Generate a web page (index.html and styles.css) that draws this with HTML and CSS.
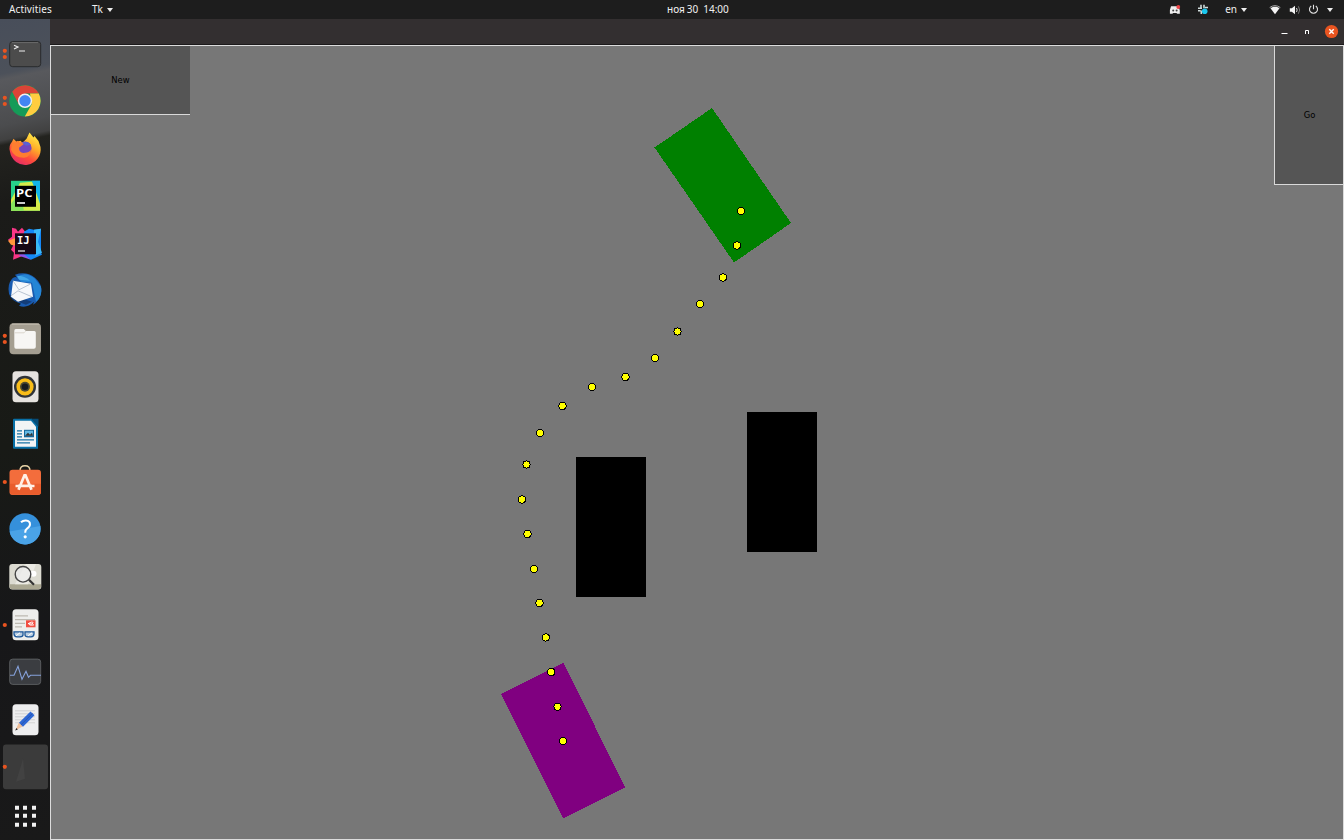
FILE: index.html
```html
<!DOCTYPE html>
<html lang="en">
<head>
<meta charset="utf-8">
<title>Tk</title>
<link rel="stylesheet" href="styles.css">
</head>
<body>
<div class="desktop">
  <header class="topbar">
    <div class="left"><span class="activities">Activities</span><span class="appname">Tk</span><i class="caret"></i></div>
    <div class="clock"><span class="month">ноя</span><span class="day">30</span><span>14:00</span></div>
    <div class="tray">
      <svg class="discord" width="12" height="10" viewBox="0 0 12 10"><path d="M2 1.2h7.5l1.3 4v3.600H8.200L7.400 8H4.200l-.8.8H.9V5z" fill="#eee"/><circle cx="4.2" cy="5.6" r="1" fill="#444"/><circle cx="7.6" cy="5.6" r="1" fill="#444"/><circle cx="9.3" cy="2" r="1.9" fill="#ed4245"/></svg>
      <svg class="slack" width="12" height="11" viewBox="0 0 12 11"><path d="M4 .8v3M1 4.200h4M7 .8v3.500M8 3.500h3M1 6.800h2.500M4.300 6.500V10" stroke="#cfdcdc" stroke-width="1.6" fill="none"/><circle cx="7.7" cy="7.3" r="2.8" fill="#19c7ee"/></svg>
      <span class="lang">en</span><i class="caret"></i>
      <svg class="wifi" width="12" height="10" viewBox="0 0 12 10"><path d="M.7 2.500Q6-1.200 11.300 2.500" fill="none" stroke="#aaa" stroke-width="1"/><path d="M1.500 3.200Q6 .3 10.500 3.200L6 9.300z" fill="#f4f4f4"/></svg>
      <svg class="volume" width="12" height="10" viewBox="0 0 12 10"><path d="M.8 3.300h2L6 .7v8.600L2.800 6.800h-2z" fill="#f4f4f4"/><path d="M7.500 3q1.300 2 0 4" fill="none" stroke="#ddd"/><path d="M9.400 1.300q2.500 3.700 0 7.400" fill="none" stroke="#777"/></svg>
      <svg class="power" width="11" height="11" viewBox="0 0 11 11"><path d="M3.200 2a4 4 0 1 0 4.600 0M5.500.7v4.600" fill="none" stroke="#e4e4e4" stroke-width="1.1"/></svg>
      <i class="caret"></i>
    </div>
  </header>
  <div class="workspace">
    <nav class="dock">
      <svg class="app" viewBox="-25 -23.8 50 47.6"><g class="run"><circle cx="-20.2" cy="-3" r="2.1"/><circle cx="-20.2" cy="3.2" r="2.1"/></g><rect x="-15.3" y="-12.3" width="31" height="25.2" rx="3" fill="#4c4c4c" stroke="#292b2d"/><path d="M-13-11.2h26" stroke="#777" stroke-width=".7"/><path d="M-11-8.5l4 1.8-4 1.8M-6-2.8h6" fill="none" stroke="#eee" stroke-width="1.1"/></svg>
      <svg class="app" viewBox="-25 -23.8 50 47.6"><g class="run"><circle cx="-20.2" cy="-3" r="2.1"/><circle cx="-20.2" cy="3.2" r="2.1"/></g><circle r="15.7" fill="#159b58"/><path d="M13.6-7.8A15.7 15.7 0 0 0-12.8-9L-6 4 0-7.3h13.8z" fill="#db4437"/><path d="M13.8-7.3A15.7 15.7 0 0 1-.2 15.7L6.7 3.5 5-7.3z" fill="#ffcd40"/><circle r="7.2" fill="#f1f1f1"/><circle r="5.7" fill="#4285f4"/></svg>
      <svg class="app" viewBox="-25 -23.8 50 47.6"><defs><linearGradient id="fire" x1=".8" y1="0" x2=".25" y2="1"><stop offset="0" stop-color="#fff04a"/><stop offset=".38" stop-color="#ffad29"/><stop offset=".7" stop-color="#ff4b3c"/><stop offset="1" stop-color="#e22a6c"/></linearGradient></defs><path d="M-11.5-10l3 3 4-1 2 2 4-4 3-6.2 4 5 1-1.5 4 5 2 6A15.4 15.4 0 0 1-15 3q-1.7-6 2-10z" fill="url(#fire)"/><circle cx="0" cy="-.8" r="6.6" fill="#7446bd"/><path d="M-13-5l6-3 2 2 6-1-3 3-4 3q0 6 6 5 4 0 6-3 0 7-7 8-10 0-13-8z" fill="#ff7d30"/><path d="M-3-6q5-3 9 2L1-3z" fill="#5a61d4"/></svg>
      <svg class="app" viewBox="-25 -23.8 50 47.6"><path d="M-14-15h29v30h-29z" fill="#27d18a"/><path d="M-5-13L7-14l8 16v13h-29V4z" fill="#d5ec49"/><path d="M7-15h8V8z" fill="#12b5e8"/><path d="M-14 8L-5-4l4 19h-13z" fill="#85e45c"/><path d="M-10-10h21v21h-21z" fill="#000"/><text x="-9" y=".8" class="ide" textLength="16.5" lengthAdjust="spacingAndGlyphs">PC</text><path d="M-8 7.2h8" stroke="#fff" stroke-width="1.6"/></svg>
      <svg class="app" viewBox="-25 -23.8 50 47.6"><path d="M-13-16L-9-15-7-12-3-16 1-11 3 10-12 16-11 9-14 6-12 2-17-4l4-3z" fill="#f83687"/><path d="M-17-3l8-3 1 8-6-1z" fill="#ff963c"/><path d="M-1-12L4-15 9-14l7-1v24l1 2L6 16-4 11z" fill="#1488f8"/><path d="M9-14l7-1-3 13 4 11-7 3z" fill="#39b8fa"/><path d="M-4 8L6 16-6 12z" fill="#8e54eb"/><path d="M-10-10.5h21v21h-21z" fill="#160716"/><text x="-8" y=".6" class="ide mono">IJ</text><path d="M-7 7.2h7" stroke="#ddd" stroke-width="1.3"/></svg>
      <svg class="app" viewBox="-25 -23.8 50 47.6"><path d="M-13-12Q-10-15-8-13L-10-16Q1-20 10-13q8 7 6 15-2 9-8 12l1-3Q2 18-6 15l2-2Q-14 10-16 3-18-6-13-12z" fill="#195bb0"/><path d="M-8-14Q1-20 10-12l6 8q2 10-5 15L7-8-4-9z" fill="#2585d5"/><path d="M-8-15q8 0 13 5l-11-1z" fill="#43a7e8"/><path d="M-15 4q2 6 8 7l8 3 6-3-9-3z" fill="#133d79"/><path d="M-12-10l18 3 2 13-15 5-7-5z" fill="#f6f8fb"/><path d="M-12-10l6 9L6-7M-14 5l7-5L7 6" fill="none" stroke="#aab6c6" stroke-width=".8"/></svg>
      <svg class="app" viewBox="-25 -23.8 50 47.6"><g class="run"><circle cx="-20.2" cy="-3" r="2.1"/><circle cx="-20.2" cy="3.2" r="2.1"/></g><rect x="-15.5" y="-15.5" width="31.5" height="31" rx="4" fill="#a49e91"/><path d="M-13-14.7h27" stroke="#c8c2b5"/><path d="M-10.7-8q0-1.7 1.5-1.7h8l2 2h8.500q1.500 0 1.500 1.500V8q0 2-2 2H-9q-1.700 0-1.700-2z" fill="#f7f6f4"/><path d="M-10.3-6H-1l1.500-1.500" stroke="#dad6cd" fill="none"/></svg>
      <svg class="app" viewBox="-25 -23.8 50 47.6"><rect x="-12.5" y="-15.5" width="26" height="31" rx="3.5" fill="#e6e3df"/><circle r="11" fill="#303438"/><circle r="8.6" fill="#f8bd18"/><circle r="5" fill="#4f4b31"/><circle r="3.3" fill="#171b20"/></svg>
      <svg class="app" viewBox="-25 -23.8 50 47.6"><path d="M-11-15H7l6 7v23h-24q-1 0-1-1v-28q0-1 1-1z" fill="#0870a7"/><path d="M-10-13H6l5 6v20h-21z" fill="#f2f4f5"/><path d="M6-15h7.500v8z" fill="#064c77"/><path d="M-8-3h5M-8 0h5M-8 3h5M-8 6H9M-8 9H5" stroke="#1972a4" stroke-width="1.3"/><path d="M-1-4H9v7.500H-1z" fill="#15679a"/><path d="M0-3h8v5H0z" fill="#62b8e4"/><path d="M0 2l3-3 2 2 2-2 1 3z" fill="#333"/></svg>
      <svg class="app" viewBox="-25 -23.8 50 47.6"><g class="run"><circle cx="-20.2" cy=".2" r="2.1"/></g><path d="M-5-11q0-5 5-5t5 5" fill="none" stroke="#e8d3a6" stroke-width="1.4"/><rect x="-15.5" y="-12" width="31.5" height="25.2" rx="3" fill="#f36d3c"/><path d="M-15 2h31v8q0 3-3 3h-25q-3 0-3-3z" fill="#e95d2d"/><path d="M-6.5 8L-.5-6.5h1L6.500 8M-7 4H7M-9.500 4.200h3M6.500 4.200h3" fill="none" stroke="#fff1e8" stroke-width="2.7"/></svg>
      <svg class="app" viewBox="-25 -23.8 50 47.6"><circle r="15.6" fill="#3590db"/><path d="M-15.6 0h31.200a15.600 15.600 0 0 1-31.200 0" transform="rotate(-10)" fill="#4aa3e7"/><path d="M-4-6.500Q-2-8.500 1-8.300 5-8 5-4.500 5-2 2-.2.2 1 .2 4" fill="none" stroke="#fff" stroke-width="2"/><circle cx=".2" cy="8" r="1.6" fill="#fff"/></svg>
      <svg class="app" viewBox="-25 -23.8 50 47.6"><rect x="-15.7" y="-12.8" width="32" height="25.5" rx="3" fill="#dcdbd1"/><path d="M-15.5 7.500h31.500v2q0 3-3 3h-25.500q-3 0-3-3z" fill="#aaa792"/><path d="M1-12.800L-10 7.500H3l8-20z" fill="#ecebe4"/><circle cx="8.5" cy="-3" r="3" fill="#fff"/><circle cx="-2" cy="-2.5" r="7.8" fill="#eee" fill-opacity=".75" stroke="#474747" stroke-width="1.4"/><path d="M4 3l5 5" stroke="#343434" stroke-width="2.2"/></svg>
      <svg class="app" viewBox="-25 -23.8 50 47.6"><g class="run"><circle cx="-20.2" cy=".2" r="2.1"/></g><rect x="-12.5" y="-15.5" width="26" height="31" rx="3.5" fill="#eeeeec"/><path d="M-10-9H3M-10-5.200H10M-10-1.500H0M-10 2H-3" stroke="#bdb9b1" stroke-width="1.2"/><path d="M1-4.500h9.500v7H1z" fill="#f14e42"/><path d="M3-1q5-3 5-1t-4 1q0 2 5 1" fill="none" stroke="#fff"/><path d="M-11 7h9v3q0 2-3 2h-3q-3 0-3-3zM0 7h9v2q0 3-3 3H3q-3 0-3-2z" fill="#b8cce0" stroke="#1c5799" stroke-width="1.3"/><path d="M-9 11l4-3M3 11l4-3" stroke="#fff"/></svg>
      <svg class="app" viewBox="-25 -23.8 50 47.6"><rect x="-15.3" y="-12.7" width="31" height="25.3" rx="3" fill="#3b3d41" stroke="#65676a" stroke-width=".8"/><path d="M-15 3.500h4l4-9 4 13 4-8 2.500 6 2-2H16" fill="none" stroke="#86a2dc" stroke-width="1.1"/></svg>
      <svg class="app" viewBox="-25 -23.8 50 47.6"><rect x="-12.5" y="-15.5" width="26" height="31" rx="3.5" fill="#eeeeef"/><path d="M-10-9H10M-10-6H10M-10-3H10M-10 0H10M-10 3H10" stroke="#cbcbcb" stroke-width=".8"/><path d="M-9.500 10.500L-6 2.500l4 4z" fill="#efc09c"/><path d="M-9.800 10.800l1.200-2.600 1.400 1.400z" fill="#222"/><path d="M-6 3L5.500-8.300l4 3.800L-2 7z" fill="#2e67d4"/><path d="M-4 5L7.500-6.400" stroke="#2855b0"/></svg>
      <svg class="app" viewBox="-25 -23.8 50 47.6"><rect x="-22" y="-22.4" width="45" height="44.8" rx="3" fill="#3b3b3b"/><path d="M-9 15Q-4-1-2-8L0 12z" fill="#424242"/><g class="run"><circle cx="-20.2" cy="0" r="2.1"/></g></svg>
      <svg class="app launcher" viewBox="-25 -23.8 50 47.6"><path d="M-10-10h4v4h-4zM-2-10h4v4h-4zM7-10h4v4H7zM-10-2h4v4h-4zM-2-2h4v4h-4zM7-2h4v4H7zM-10 7h4v4h-4zM-2 7h4v4h-4zM7 7h4v4H7z" fill="#f2f2f2"/></svg>
    </nav>
    <main class="window">
      <div class="titlebar">
        <svg width="64" height="16" viewBox="0 0 64 16"><path d="M4.500 9.500h6" stroke="#fff"/><path d="M28.500 10V6.500h3V10" fill="none" stroke="#fff"/><circle cx="54.5" cy="7.5" r="6.6" fill="#e95420"/><path d="M52.300 5.300l4.400 4.400M56.700 5.300l-4.400 4.400" stroke="#fff" stroke-width="1.4"/></svg>
      </div>
      <div class="client">
        <svg class="scene" viewBox="51 46 1292 793" shape-rendering="crispEdges">
          <path d="M712 108L791 223 734 262.500 654.500 147.500z" fill="#008000"/>
          <path d="M563.500 663L625.300 787.500 563.500 818.500 501 694z" fill="#800080"/>
          <path d="M576 457h70v140h-70zM747 412h70v140h-70z"/>
          <g class="trail">
            <circle cx="741" cy="211" r="3.600"/><circle cx="737" cy="245.500" r="3.600"/><circle cx="723" cy="277.500" r="3.600"/><circle cx="700" cy="304" r="3.600"/><circle cx="677.500" cy="331.500" r="3.600"/><circle cx="655" cy="358" r="3.600"/><circle cx="625.500" cy="377" r="3.600"/><circle cx="592" cy="387" r="3.600"/><circle cx="562.500" cy="406" r="3.600"/><circle cx="540" cy="433" r="3.600"/><circle cx="526.500" cy="464.500" r="3.600"/><circle cx="522" cy="499.500" r="3.600"/><circle cx="527.500" cy="534" r="3.600"/><circle cx="534" cy="569" r="3.600"/><circle cx="539.500" cy="603" r="3.600"/><circle cx="545.800" cy="637.500" r="3.600"/><circle cx="551.200" cy="672" r="3.600"/><circle cx="557.500" cy="706.700" r="3.600"/><circle cx="563" cy="741" r="3.600"/>
          </g>
        </svg>
        <div class="controls"><div class="new">New</div><div class="go">Go</div></div>
      </div>
    </main>
  </div>
</div>
</body>
</html>
```
FILE: styles.css
```css
body { margin: 0; overflow: hidden; font-family: "Noto Sans", sans-serif; }
.desktop { width: 1344px; height: 840px; display: flex; flex-direction: column; }
.topbar { height: 19px; flex: none; display: grid; grid-template-columns: 667px 64px 1fr; align-items: center; background: #1d1d1d; color: #f0f0f0; font-size: 10px; line-height: 19px; }
.left { display: flex; align-items: center; padding-left: 9px; }
.activities { width: 83px; letter-spacing: .12px; }
.appname { margin-right: 4px; }
.caret { width: 0; height: 0; border: 3.4px solid transparent; border-top: 4px solid #eee; border-bottom: 0; }
.clock { display: flex; white-space: nowrap; }
.month { font-size: 10px; margin-right: 2px; }
.day { margin-right: 5px; }
.tray { display: flex; align-items: center; justify-content: flex-end; padding-right: 11px; }
.discord { margin-right: 16px; }
.slack { margin-right: 16px; }
.lang { margin-right: 4px; }
.wifi { margin: 0 8px 0 22px; }
.volume { margin-right: 7px; }
.power { margin-right: 8px; }
.workspace { flex: 1; min-height: 0; display: flex; }
.dock { width: 50px; box-sizing: border-box; flex: none; padding-top: 10.5px; display: flex; flex-direction: column; background: linear-gradient(168deg, #484e5a 0, #4c515a 54px, #58595d 60px, #4b4c4e 105px, #414141 119px, #23231f 124px, #1b1b19 180px, #181a16 420px, #171719 600px, #191919 100%); }
.app { width: 50px; height: 47.6px; flex: none; }
.launcher { margin-top: 1px; }
.run { fill: #e95420; }
.ide { font: bold 10.5px "Open Sans", sans-serif; fill: #fff; }
.mono { font-family: "DejaVu Sans Mono", monospace; }
.window { flex: 1; display: flex; flex-direction: column; }
.titlebar { height: 25px; flex: none; display: flex; align-items: center; justify-content: flex-end; padding-right: 3px; background: #332f30; border-bottom: 1px solid #1c1a1b; }
.client { flex: 1; min-height: 0; box-sizing: border-box; border: 1px solid #dcdcdc; background: #777; display: grid; }
.scene, .controls { grid-area: 1 / 1; }
.scene { width: 1292px; height: 793px; }
.trail { fill: #ff0; stroke: #000; stroke-width: 1; }
.controls { display: flex; justify-content: space-between; align-items: flex-start; font: 8.4px "DejaVu Sans", sans-serif; color: #000; }
.new, .go { background: #555; border-bottom: 1px solid #d9d9d9; display: flex; align-items: center; justify-content: center; }
.new { width: 139px; height: 68px; }
.go { width: 67px; height: 138px; border-left: 1px solid #d9d9d9; padding-left: 1px; }
```
